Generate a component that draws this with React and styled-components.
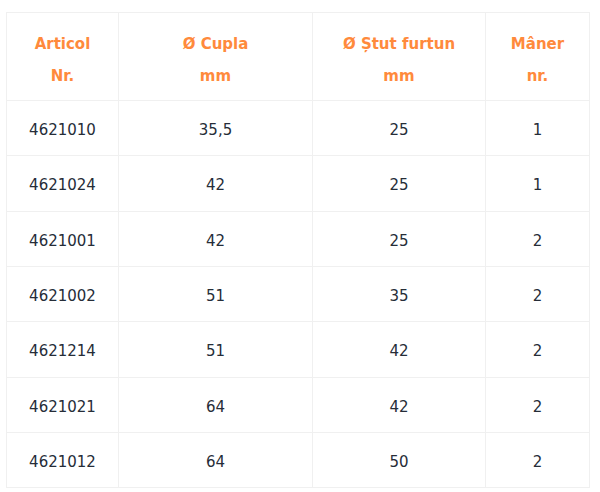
import React from 'react';
import styled, { createGlobalStyle } from 'styled-components';

const GlobalStyle = createGlobalStyle`
  body {
    margin: 0;
    background: #ffffff;
    font-family: 'DejaVu Sans', 'Liberation Sans', sans-serif;
  }
`;

const Wrapper = styled.div`
  padding: 12px 0 0 6px;
`;

const Table = styled.table`
  border-collapse: collapse;
  table-layout: fixed;
  font-size: 15px;
`;

const HeadCell = styled.th`
  width: ${({ $w }) => $w}px;
  height: 81px;
  padding: 6px 0 0;
  border: 1px solid #f0f0f0;
  color: #ff8a3c;
  font-weight: bold;
  line-height: 32px;
  text-align: center;
  vertical-align: middle;
`;

const Cell = styled.td`
  height: 50.33px;
  padding: 4px 0 0;
  border: 1px solid #f0f0f0;
  color: #262d38;
  text-align: center;
  vertical-align: middle;
`;

const columns = [
  { w: 111, top: 'Articol', bottom: 'Nr.' },
  { w: 193, top: 'Ø Cupla', bottom: 'mm' },
  { w: 172, top: 'Ø Ștut furtun', bottom: 'mm' },
  { w: 103, top: 'Mâner', bottom: 'nr.' }
];

const rows = [
  ['4621010', '35,5', '25', '1'],
  ['4621024', '42', '25', '1'],
  ['4621001', '42', '25', '2'],
  ['4621002', '51', '35', '2'],
  ['4621214', '51', '42', '2'],
  ['4621021', '64', '42', '2'],
  ['4621012', '64', '50', '2']
];

const App = () => (
  <>
    <GlobalStyle />
    <Wrapper>
      <Table>
        <thead>
          <tr>
            {columns.map((c) => (
              <HeadCell key={c.top} $w={c.w}>
                {c.top}
                <br />
                {c.bottom}
              </HeadCell>
            ))}
          </tr>
        </thead>
        <tbody>
          {rows.map((r) => (
            <tr key={r[0]}>
              {r.map((v, i) => (
                <Cell key={i}>{v}</Cell>
              ))}
            </tr>
          ))}
        </tbody>
      </Table>
    </Wrapper>
  </>
);

export default App;
